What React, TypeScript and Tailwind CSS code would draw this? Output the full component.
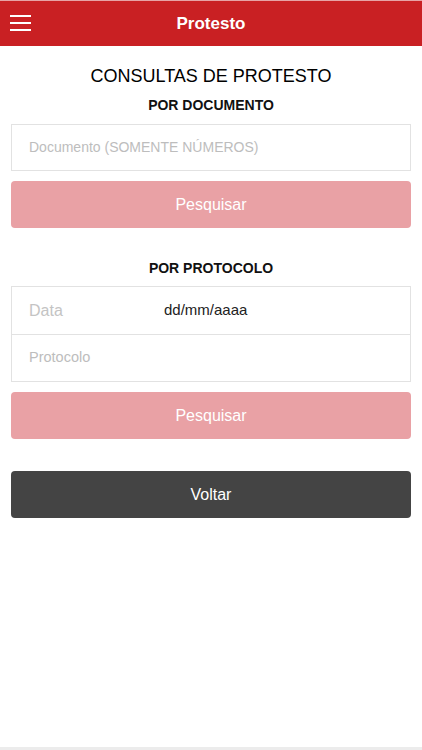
export default function App() {
  return (
    <div className="flex min-h-[750px] flex-col bg-white font-['Liberation_Sans',Arial,sans-serif]">
      {/* Barra superior */}
      <header className="relative flex h-[46px] items-center justify-center border-t border-[#e7a3a5] bg-[#c92023]">
        <button className="absolute left-[10px] top-[14px] flex w-[21px] flex-col gap-[5px]">
          <span className="h-[2px] w-full bg-white" />
          <span className="h-[2px] w-full bg-white" />
          <span className="h-[2px] w-full bg-white" />
        </button>
        <h1 className="text-[17px] font-bold text-white">Protesto</h1>
      </header>

      <main className="flex flex-1 flex-col px-[11px]">
        <h2 className="mt-[17px] text-center text-[18px] leading-[27px] text-black">CONSULTAS DE PROTESTO</h2>
        <h3 className="mt-[5px] text-center text-[14px] leading-[21px] font-bold text-[#111]">POR DOCUMENTO</h3>

        <div className="mt-[8px] flex h-[47px] items-center border border-[#e2e2e2] px-[17px]">
          <span className="text-[14px] text-[#bdbdbd]">Documento (SOMENTE NÚMEROS)</span>
        </div>
        <button className="mt-[10px] h-[47px] rounded-[4px] bg-[#e9a1a5] text-[16px] text-white">
          Pesquisar
        </button>

        <h3 className="mt-[30px] text-center text-[14px] leading-[21px] font-bold text-[#111]">POR PROTOCOLO</h3>

        <div className="mt-[7px] border border-[#e2e2e2]">
          <div className="flex h-[48px] items-center border-b border-[#e2e2e2] px-[17px]">
            <span className="w-[135px] text-[16px] text-[#c4c4c4]">Data</span>
            <span className="text-[15px] text-[#222]">dd/mm/aaaa</span>
          </div>
          <div className="flex h-[46px] items-center px-[17px]">
            <span className="text-[14.5px] text-[#bdbdbd]">Protocolo</span>
          </div>
        </div>
        <button className="mt-[10px] h-[47px] rounded-[4px] bg-[#e9a1a5] text-[16px] text-white">
          Pesquisar
        </button>

        <button className="mt-[32px] h-[47px] rounded-[4px] bg-[#444444] text-[16px] text-white">
          Voltar
        </button>
      </main>

      <div className="h-[3px] bg-[#ececec]" />
    </div>
  )
}
